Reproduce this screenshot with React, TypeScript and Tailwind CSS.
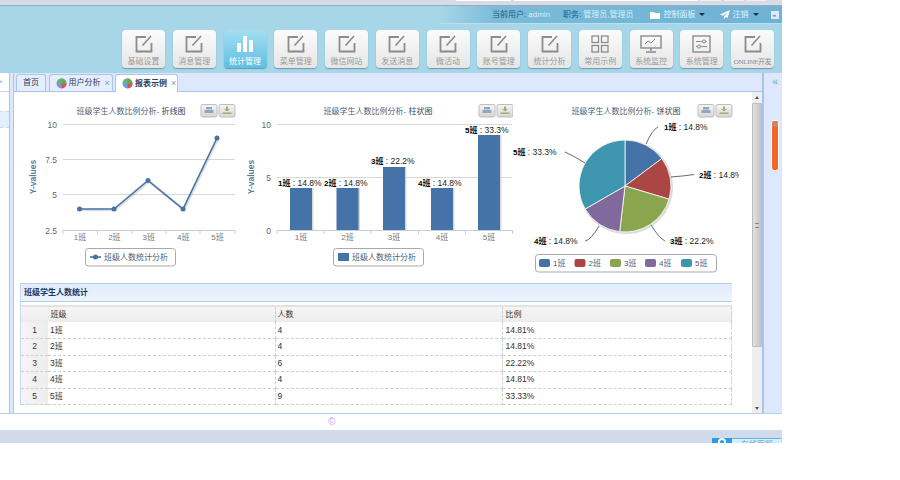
const navItems = [
  { label: "基础设置", icon: "edit" },
  { label: "消息管理", icon: "edit" },
  { label: "统计管理", icon: "bars", active: true },
  { label: "菜单管理", icon: "edit" },
  { label: "微信网站", icon: "edit" },
  { label: "发送消息", icon: "edit" },
  { label: "微活动", icon: "edit" },
  { label: "账号管理", icon: "edit" },
  { label: "统计分析", icon: "edit" },
  { label: "常用示例", icon: "grid" },
  { label: "系统监控", icon: "monitor" },
  { label: "系统管理", icon: "sliders" },
  { label: "ONLINE开发", icon: "edit", small: true },
];

const rows = [
  { no: "1", count: 4, pct: "14.81%" },
  { no: "2", count: 4, pct: "14.81%" },
  { no: "3", count: 6, pct: "22.22%" },
  { no: "4", count: 4, pct: "14.81%" },
  { no: "5", count: 9, pct: "33.33%" },
];

const NavIcon = ({ type }: { type: string }) => {
  if (type === "bars") {
    return (
      <svg width="18" height="18" viewBox="0 0 18 18" fill="#fff">
        <rect x="1" y="8" width="4" height="9" />
        <rect x="7" y="1" width="4" height="16" />
        <rect x="13" y="5" width="4" height="12" />
      </svg>
    );
  }
  if (type === "grid") {
    return (
      <svg width="18" height="18" viewBox="0 0 18 18" fill="none" stroke="#8c8c8c" strokeWidth="1.3">
        <rect x="1" y="1" width="6.5" height="6.5" />
        <rect x="10.5" y="1" width="6.5" height="6.5" />
        <rect x="1" y="10.5" width="6.5" height="6.5" />
        <rect x="10.5" y="10.5" width="6.5" height="6.5" />
      </svg>
    );
  }
  if (type === "monitor") {
    return (
      <svg width="22" height="18" viewBox="0 0 22 18" fill="none" stroke="#8c8c8c" strokeWidth="1.4">
        <rect x="1" y="1" width="20" height="12" />
        <path d="M5 9l3-3 3 2 4-4" strokeWidth="1" />
        <path d="M11 13v3M6 17h10" strokeWidth="1.6" />
      </svg>
    );
  }
  if (type === "sliders") {
    return (
      <svg width="19" height="18" viewBox="0 0 19 18" fill="none" stroke="#8c8c8c" strokeWidth="1.4">
        <rect x="1" y="1" width="17" height="16" />
        <path d="M4 6.5h11M4 11.5h11" strokeWidth="1" />
        <circle cx="12" cy="6.5" r="1.6" fill="#eee" strokeWidth="1" />
        <circle cx="7" cy="11.5" r="1.6" fill="#eee" strokeWidth="1" />
      </svg>
    );
  }
  return (
    <svg width="18" height="18" viewBox="0 0 18 18" fill="none" stroke="#8c8c8c" strokeWidth="1.8">
      <path d="M11 2H1.5v14.500h15V8" />
      <path d="M7.500 10.500L16 1" strokeWidth="1.600" />
    </svg>
  );
};

const BallIcon = () => (
  <svg width="11" height="11" viewBox="0 0 11 11" className="shrink-0">
    <circle cx="5.500" cy="5.500" r="5" fill="#6f9fd8" />
    <path d="M5.500 5.500V.5A5 5 0 0 1 10.500 5.500z" fill="#5fae4e" />
    <path d="M5.500 5.500h5A5 5 0 0 1 5.500 10.500z" fill="#d9534f" />
    <path d="M1 3a5 5 0 0 1 4.500-2.500v5z" fill="#68b85a" />
  </svg>
);

const ChartDefs = () => (
  <defs>
    <linearGradient id="toolBg" x1="0" y1="0" x2="0" y2="1">
      <stop offset="0" stopColor="#f6f6f6" />
      <stop offset="1" stopColor="#d6d6d6" />
    </linearGradient>
  </defs>
);

const ChartTools = ({ x }: { x: number }) => (
  <g>
    <rect x={x} y="104.500" width="16" height="12.500" rx="2" fill="url(#toolBg)" stroke="#bdbdbd" />
    <path d={`M${x + 5} 107h6v2.500h-6zM${x + 3.500} 110h9v3h-9z`} fill="#8fa8bf" />
    <rect x={x + 18} y="104.500" width="16" height="12.500" rx="2" fill="url(#toolBg)" stroke="#bdbdbd" />
    <path d={`M${x + 25} 106.500h2v2.500h2l-3 2.500-3-2.500h2zM${x + 21.500} 112.500h9v1.500h-9z`} fill="#a3aa72" />
  </g>
);

const ChartTitle = ({ x, text, kind }: { x: number; text: string; kind: string }) => (
  <text x={x} y="114" fontSize="8" fill="#4d6176" textAnchor="middle">
    {text}
    <tspan fill="#33475c">{kind}</tspan>
  </text>
);

const LineChart = () => {
  const pts = [
    [79.5, 209],
    [114, 209],
    [148, 180.5],
    [183, 209],
    [217, 138],
  ];
  const line = pts.map((p) => p.join(",")).join(" ");
  return (
    <svg width="220" height="180" viewBox="20 95 220 180" className="shrink-0">
      <ChartDefs />
      <ChartTitle x={131} text="班级学生人数比例分析- " kind="折线图" />
      <ChartTools x={201} />
      {[124.5, 159.5, 194.5].map((y) => (
        <line key={y} x1="63" x2="235" y1={y} y2={y} stroke="#d8d8d8" />
      ))}
      <line x1="63" x2="235" y1="230.500" y2="230.500" stroke="#c0d0e0" />
      {[63, 97.5, 132, 166, 200, 235].map((x) => (
        <line key={x} x1={x} x2={x} y1="230" y2="234" stroke="#c0d0e0" />
      ))}
      {[
        ["10", 127.5],
        ["7.5", 162.5],
        ["5", 197.5],
        ["2.5", 234],
      ].map(([t, y]) => (
        <text key={t} x="57" y={y} fontSize="8.500" fill="#666" textAnchor="end">
          {t}
        </text>
      ))}
      <text transform="translate(36 177) rotate(-90)" fontSize="8.500" fontWeight="700" fill="#5d7a99" textAnchor="middle">
        Y-values
      </text>
      {["1班", "2班", "3班", "4班", "5班"].map((t, i) => (
        <text key={t} x={80 + i * 34.4} y="240" fontSize="8" fill="#777" textAnchor="middle">
          {t}
        </text>
      ))}
      <polyline points={line} fill="none" stroke="#000" strokeOpacity="0.12" strokeWidth="2.500" transform="translate(1 1)" />
      <polyline points={line} fill="none" stroke="#4572a7" strokeWidth="1.600" />
      {pts.map(([x, y]) => (
        <circle key={x} cx={x} cy={y} r="2.500" fill="#4572a7" />
      ))}
      <rect x="85.500" y="248.500" width="90" height="17.500" rx="3" fill="#fff" stroke="#a9a9a9" />
      <line x1="90" x2="101" y1="257" y2="257" stroke="#4572a7" strokeWidth="1.600" />
      <circle cx="95.500" cy="257" r="2.500" fill="#4572a7" />
      <text x="104" y="260" fontSize="8" fill="#4d6176">
        班级人数统计分析
      </text>
    </svg>
  );
};

const BarChart = () => {
  const bars = [
    { x: 290, top: 188, label: "1班", pct: ": 14.8%", lx: 278, ly: 186 },
    { x: 336.5, top: 188, label: "2班", pct: ": 14.8%", lx: 324, ly: 186 },
    { x: 383, top: 167, label: "3班", pct: ": 22.2%", lx: 371, ly: 164 },
    { x: 431, top: 188, label: "4班", pct: ": 14.8%", lx: 418, ly: 186 },
    { x: 478, top: 135, label: "5班", pct: ": 33.3%", lx: 465, ly: 133 },
  ];
  return (
    <svg width="273" height="180" viewBox="240 95 273 180" className="shrink-0">
      <ChartDefs />
      <ChartTitle x={378} text="班级学生人数比例分析- " kind="柱状图" />
      <ChartTools x={479} />
      {[124.5, 177.5].map((y) => (
        <line key={y} x1="277" x2="512" y1={y} y2={y} stroke="#d8d8d8" />
      ))}
      {[
        ["10", 127.5],
        ["5", 181],
        ["0", 234],
      ].map(([t, y]) => (
        <text key={t} x="271" y={y} fontSize="8.500" fill="#666" textAnchor="end">
          {t}
        </text>
      ))}
      <text transform="translate(254 177) rotate(-90)" fontSize="8.500" fontWeight="700" fill="#5d7a99" textAnchor="middle">
        Y-values
      </text>
      {bars.map((b) => (
        <g key={b.x}>
          <rect x={b.x + 1.5} y={b.top} width="22" height={230 - b.top} fill="#d5d9de" />
          <rect x={b.x} y={b.top} width="22" height={230 - b.top} fill="#4572a7" />
          <text x={b.lx} y={b.ly} fontSize="8.500" fill="#222">
            <tspan fontWeight="700" fontSize="8" fill="#000">
              {b.label}
            </tspan>{" "}
            {b.pct}
          </text>
          <text x={b.x + 11} y="240" fontSize="8" fill="#777" textAnchor="middle">
            {b.label}
          </text>
        </g>
      ))}
      <line x1="277" x2="513" y1="230.500" y2="230.500" stroke="#c0d0e0" />
      {[277, 324, 371, 418.5, 465.5, 512.5].map((x) => (
        <line key={x} x1={x} x2={x} y1="230" y2="234" stroke="#c0d0e0" />
      ))}
      <rect x="333.500" y="248.500" width="90" height="17.500" rx="3" fill="#fff" stroke="#a9a9a9" />
      <rect x="338" y="253" width="11" height="8" fill="#4572a7" />
      <text x="352" y="260" fontSize="8" fill="#4d6176">
        班级人数统计分析
      </text>
    </svg>
  );
};

const slices = [
  { value: 4, color: "#4572a7" },
  { value: 4, color: "#aa4643" },
  { value: 6, color: "#89a54e" },
  { value: 4, color: "#80699b" },
  { value: 9, color: "#3d96ae" },
];

const PieChart = () => {
  const cx = 626;
  const cy = 186;
  const r = 46;
  let angle = 0;
  const paths = slices.map((s) => {
    const a0 = angle;
    angle += (s.value / 27) * Math.PI * 2;
    const large = angle - a0 > Math.PI ? 1 : 0;
    const p = (a: number) => `${cx + r * Math.sin(a)} ${cy - r * Math.cos(a)}`;
    return { d: `M${cx} ${cy}L${p(a0)}A${r} ${r} 0 ${large} 1 ${p(angle)}z`, color: s.color };
  });
  const labels = [
    { t: "1班", p: ": 14.8%", x: 665, y: 130, d: "M647 144Q653 130 659 127" },
    { t: "2班", p: ": 14.8%", x: 700, y: 178, d: "M672 177Q685 176 695 174.500" },
    { t: "3班", p: ": 22.2%", x: 671, y: 244, d: "M652 225Q660 238 666 241" },
    { t: "4班", p: ": 14.8%", x: 535, y: 244, d: "M600 226Q592 240 586 241" },
    { t: "5班", p: ": 33.3%", x: 514, y: 155, d: "M586 163Q575 156 566 152" },
  ];
  const legend = [540, 575.5, 611, 646, 682];
  return (
    <svg width="226" height="180" viewBox="514 95 226 180" className="shrink-0">
      <ChartDefs />
      <ChartTitle x={627} text="班级学生人数比例分析- " kind="饼状图" />
      <ChartTools x={699} />
      <circle cx={cx + 1} cy={cy + 1} r={r + 1} fill="#000" fillOpacity="0.14" />
      {paths.map((s) => (
        <path key={s.color} d={s.d} fill={s.color} stroke="#fff" strokeWidth="0.800" />
      ))}
      {labels.map((l) => (
        <g key={l.t}>
          <path d={l.d} fill="none" stroke="#444" strokeWidth="0.800" />
          <text x={l.x} y={l.y} fontSize="8.500" fill="#222">
            <tspan fontWeight="700" fontSize="8" fill="#000">
              {l.t}
            </tspan>{" "}
            {l.p}
          </text>
        </g>
      ))}
      <rect x="536.500" y="254.500" width="181" height="17.500" rx="3" fill="#fff" stroke="#a9a9a9" />
      {legend.map((x, i) => (
        <g key={x}>
          <rect x={x} y="259" width="11" height="8" rx="2" fill={slices[i].color} />
          <text x={x + 14} y="266" fontSize="8" fill="#4d6176">
            {i + 1}班
          </text>
        </g>
      ))}
    </svg>
  );
};

const cellBase = "border-b border-r border-dashed border-[#cfcfcf] px-[2px] align-middle text-[#2f2f2f]";

export default function App() {
  return (
    <div className="w-[782px] bg-white text-[8px] text-[#333] [font-family:'Liberation_Sans','Noto_Sans_CJK_SC',sans-serif]">
      <div className="flex h-[6px] justify-end gap-[3px] overflow-hidden border-b border-[#a0aab5] bg-[#d5dce8]">
        <div className="h-[1px] w-[55px] bg-white" />
        <div className="h-[1px] w-[184px] bg-white" />
        <div className="h-[1px] w-[20px] bg-[#eef0f4]" />
        <div className="h-[1px] w-[20px] bg-[#eef0f4]" />
        <div className="h-[1px] w-[20px] bg-[#eef0f4]" />
        <div className="w-[12px]" />
      </div>

      <header className="h-[67px] bg-[#a6d6e8]">
        <div className="ml-[440px] flex h-[18px] items-center whitespace-nowrap border-b border-[#b9e0ee] bg-[linear-gradient(90deg,#a6d6e8,#7cbbd9_16%,#6eb2d5)] pl-[52px] text-[8px]">
          <span className="text-[#1f5a85]">当前用户:</span>
          <span className="ml-[2px] text-[#d6eef6]">admin</span>
          <span className="ml-[13px] text-[#1f5a85]">职务:</span>
          <span className="ml-[2px] text-[#d6eef6]">管理员,管理员</span>
          <svg width="10" height="8" viewBox="0 0 10 8" fill="#fff" className="ml-[16px] shrink-0">
            <path d="M0 1h4l1 1h5v6H0z" />
          </svg>
          <span className="ml-[4px] text-[#e2f3f9]">控制面板</span>
          <span className="ml-[3px] h-0 w-0 border-x-[3px] border-t-[3px] border-x-transparent border-t-[#12324a]" />
          <svg width="10" height="9" viewBox="0 0 10 9" fill="#fff" className="ml-[15px] shrink-0">
            <path d="M10 0L0 4.500l3 1.200L8 2 4 6.500V9l2-2 1.500 1z" />
          </svg>
          <span className="ml-[3px] text-[#e2f3f9]">注销</span>
          <span className="ml-[4px] h-0 w-0 border-x-[3px] border-t-[3px] border-x-transparent border-t-[#12324a]" />
          <span className="ml-[12px] flex h-[8px] w-[8px] items-center justify-center bg-[#dfe9fb] text-[6px] leading-none text-[#2a5caa]">
            «
          </span>
        </div>
        <nav className="flex gap-[7.75px] pl-[122px] pt-[6px]">
          {navItems.map((item) => (
            <div
              key={item.label}
              className={
                item.active
                  ? "flex h-[38px] w-[43px] flex-col items-center rounded-[4px] bg-[linear-gradient(180deg,#a4def1,#5cbfe3)] pt-[5px] shadow-[0_1px_1px_rgba(60,90,110,0.5)]"
                  : "flex h-[38px] w-[43px] flex-col items-center rounded-[4px] bg-[linear-gradient(180deg,#fbfbfb,#e6e6e6)] pt-[5px] shadow-[0_1px_1px_rgba(60,90,110,0.5)]"
              }
            >
              <div className="flex h-[18px] items-center">
                <NavIcon type={item.icon} />
              </div>
              <span
                className={
                  item.active
                    ? "mt-[4px] whitespace-nowrap text-[8px] leading-[10px] text-white"
                    : item.small
                      ? "mt-[4px] whitespace-nowrap text-[7px] leading-[10px] tracking-[-0.3px] text-[#8a8a8a] [font-family:'Liberation_Serif','Noto_Sans_CJK_SC',serif]"
                      : "mt-[4px] whitespace-nowrap text-[8px] leading-[10px] text-[#9a9a9a]"
                }
              >
                {item.label}
              </span>
            </div>
          ))}
        </nav>
      </header>

      <main className="flex h-[341px] overflow-hidden border-b border-[#b5d0ee]">
        <aside className="w-[9px] shrink-0 overflow-hidden bg-white">
          <div className="flex h-[19px] items-center justify-end border-b border-[#c8d8ee] pr-[6px] text-[8px] text-[#8fb0d8]">
            ×
          </div>
          <div className="mt-[19px] h-[17px] border-y border-dashed border-[#c6d8f2] bg-[#e4eefc]" />
        </aside>
        <div className="w-[5px] shrink-0 border-x border-[#a9c5ec] bg-[#dde8fc]" />

        <div className="flex min-w-0 flex-1 flex-col">
          <div className="flex h-[19px] shrink-0 items-end gap-[2.5px] border-b border-[#a9c5ec] bg-[#dde8fc] pl-[2px]">
            <div className="flex h-[17px] w-[30px] items-center justify-center rounded-t-[3px] border border-b-0 border-[#a9c5ec] bg-[#e6eefd] text-[#23405f]">
              首页
            </div>
            <div className="flex h-[17px] w-[64px] items-center gap-[2px] rounded-t-[3px] border border-b-0 border-[#a9c5ec] bg-[#e6eefd] pl-[6px] text-[#23405f]">
              <BallIcon />
              <span className="whitespace-nowrap">用户分析</span>
              <span className="ml-[2px] text-[9px] leading-none text-[#7f96b3]">×</span>
            </div>
            <div className="-mb-px flex h-[18px] w-[63px] items-center gap-[2px] rounded-t-[3px] border border-b-0 border-[#a9c5ec] bg-white pl-[6px] font-bold text-[#23405f]">
              <BallIcon />
              <span className="whitespace-nowrap">报表示例</span>
              <span className="ml-[2px] text-[9px] font-normal leading-none text-[#7f96b3]">×</span>
            </div>
          </div>

          <div className="flex min-h-0 flex-1">
            <div className="min-w-0 flex-1 pl-[6px] pt-[3px]">
              <div className="flex">
                <LineChart />
                <BarChart />
                <PieChart />
              </div>
              <section className="mt-[8px] w-[712px] border-l border-[#c9d9ee]">
                <div className="flex h-[19px] items-center border-y border-[#b5d0ee] bg-[linear-gradient(180deg,#e2ecfd,#edf3fe)] pl-[3px] font-bold text-[#1c3a66]">
                  班级学生人数统计
                </div>
                <table className="mt-[3px] w-full table-fixed border-collapse border-t-2 border-[#e2e2e2] bg-white">
                  <colgroup>
                    <col className="w-[27px]" />
                    <col className="w-[227px]" />
                    <col className="w-[227px]" />
                    <col />
                  </colgroup>
                  <thead>
                    <tr className="h-[16px] bg-[linear-gradient(180deg,#f6f6f6,#ececec)] text-left font-normal">
                      <th className="border-r border-[#f0f0f0]" />
                      <th className="border-r border-dashed border-[#cfcfcf] px-[2px] font-normal">班级</th>
                      <th className="border-r border-dashed border-[#cfcfcf] px-[2px] font-normal">人数</th>
                      <th className="border-r border-dashed border-[#cfcfcf] px-[3px] font-normal">比例</th>
                    </tr>
                  </thead>
                  <tbody>
                    {rows.map((row) => (
                      <tr key={row.no} className="h-[16.5px]">
                        <td className="border-b border-dashed border-[#cfcfcf] bg-[linear-gradient(90deg,#f5f5f5,#ededed)] text-center text-[8.5px]">
                          {row.no}
                        </td>
                        <td className={cellBase}>
                          <span className="text-[8.5px]">{row.no}</span>班
                        </td>
                        <td className={`${cellBase} text-[8.5px]`}>{row.count}</td>
                        <td className={`${cellBase} pl-[3px] text-[8.5px]`}>{row.pct}</td>
                      </tr>
                    ))}
                  </tbody>
                </table>
              </section>
            </div>

            <div className="flex w-[10px] shrink-0 flex-col bg-[#eeeeee]">
              <div className="flex h-[11px] items-center justify-center">
                <span className="h-0 w-0 border-x-[2px] border-b-[3px] border-x-transparent border-b-[#555]" />
              </div>
              <div className="flex h-[244px] items-center justify-center rounded-[1px] border border-[#bdbdbd] bg-[linear-gradient(90deg,#e2e2e2,#c2c2c2)]">
                <span className="h-[5px] w-[4px] border-y border-[#888]" />
              </div>
              <div className="mt-auto flex h-[9px] items-center justify-center">
                <span className="h-0 w-0 border-x-[2px] border-t-[3px] border-x-transparent border-t-[#555]" />
              </div>
            </div>
          </div>
        </div>

        <aside className="flex w-[20px] shrink-0 flex-col items-center border-l-2 border-[#a9c5ec] bg-[#dde8fc] pl-[4px]">
          <span className="mt-[2px] text-[11px] leading-[12px] text-[#6aa6e0]">«</span>
          <div className="mt-[33px] h-[51px] w-[8px] overflow-hidden rounded-[3px] border border-white bg-[#f26522]">
            <div className="h-[6px] bg-[#cf8466]" />
          </div>
        </aside>
      </main>

      <div className="flex h-[16px] items-center pl-[328px] text-[10px] leading-none text-[#c8a4f2]">©</div>

      <div className="flex h-[13px] justify-end overflow-hidden bg-[#d0daea] pr-[1px] pt-[8px]">
        <div className="flex h-[5px] w-[20px] justify-center bg-[#2a9ce8]">
          <span className="h-[8px] w-[8px] rounded-full border-2 border-white" />
        </div>
        <div className="h-[5px] w-[49px] overflow-hidden border-t border-[#59b4ec] bg-[#d4f0fc] pl-[9px] text-[8px] leading-[12px] text-[#8a9aa8]">
          在线客服
        </div>
      </div>
    </div>
  );
}
